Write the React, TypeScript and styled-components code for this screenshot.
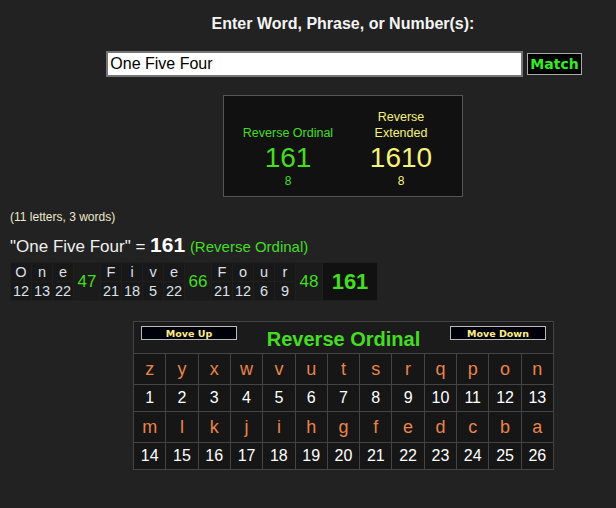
import styled, { createGlobalStyle } from "styled-components";

const GlobalStyle = createGlobalStyle`
  body {
    margin: 0;
    background: #222222;
    font-family: Arial, "Liberation Sans", sans-serif;
    color: #ffffff;
  }
`;

const Page = styled.main`
  width: 616px;
  height: 508px;
  overflow: hidden;
  padding-top: 14px;
  box-sizing: border-box;
`;

const Centered = styled.section`
  margin-left: 70px;
  width: 546px;
  display: flex;
  flex-direction: column;
  align-items: center;
`;

const Title = styled.h1`
  margin: 0;
  font-size: 16px;
  font-weight: bold;
  color: #f4f4f4;
  line-height: 19px;
`;

const SearchRow = styled.form`
  display: flex;
  align-items: center;
  gap: 4px;
  margin-top: 18px;
  margin-left: 2px;
`;

const SearchInput = styled.input`
  width: 417px;
  height: 26px;
  box-sizing: border-box;
  border: 2px solid #767676;
  background: #ffffff;
  font-family: Arial, "Liberation Sans", sans-serif;
  font-size: 16px;
  padding: 0 2px;
  color: #000;
  outline: none;
`;

const MatchButton = styled.button`
  height: 22px;
  padding: 0 2px;
  background: #000;
  border: 1px solid #aaaaaa;
  color: #33ee22;
  font-family: "DejaVu Sans", Verdana, sans-serif;
  font-weight: bold;
  font-size: 14px;
  line-height: 18px;
`;

const ResultBox = styled.div`
  margin-top: 18px;
  width: 240px;
  height: 102px;
  box-sizing: border-box;
  border: 1px solid #555555;
  background: #111111;
  display: grid;
  grid-template-columns: 108px 98px;
  column-gap: 10px;
  padding: 0 14px 9px 10px;
  align-items: end;
`;

const Cipher = styled.div<{ $color: string }>`
  display: flex;
  flex-direction: column;
  align-items: center;
  color: ${(p) => p.$color};
  text-align: center;
`;

const CipherName = styled.div`
  font-size: 12.5px;
  line-height: 16px;
`;

const CipherValue = styled.div`
  font-size: 28px;
  line-height: 34px;
`;

const CipherSub = styled.div`
  font-size: 12px;
  line-height: 12px;
`;

const Details = styled.section`
  margin-top: 13px;
  padding-left: 10px;
`;

const Count = styled.div`
  font-size: 12px;
  color: #eee8cc;
  line-height: 14px;
`;

const Phrase = styled.div`
  margin-top: 10px;
  font-size: 17px;
  line-height: 22px;
  color: #f0f0f0;
`;

const PhraseTotal = styled.b`
  font-size: 21px;
  color: #ffffff;
`;

const PhraseCipher = styled.span`
  font-size: 15px;
  color: #44dd22;
`;

const Breakdown = styled.table`
  margin-top: 4px;
  border-collapse: separate;
  border-spacing: 1px;
  background: #1f1f1f;
`;

const LetterCell = styled.td`
  min-width: 20px;
  width: 20px;
  padding: 0;
  height: 18px;
  text-align: center;
  background: #181818;
  color: #dde0ea;
  font-size: 14.5px;
  line-height: 18px;
`;

const SumCell = styled.td`
  min-width: 26px;
  padding: 0;
  text-align: center;
  background: #1b1b1b;
  color: #44dd22;
  font-size: 17px;
`;

const TotalCell = styled.td`
  min-width: 54px;
  padding: 0;
  text-align: center;
  background: #111111;
  color: #44dd22;
  font-size: 22px;
  font-weight: bold;
`;

const Chart = styled.section`
  margin-top: 20px;
  margin-left: 1px;
  width: 419px;
  border: 1px solid #444444;
  background: #444444;
`;

const ChartHeader = styled.div`
  height: 31px;
  background: #1b1b1b;
  display: flex;
  align-items: flex-start;
  justify-content: space-between;
  padding: 0 7px;
  margin-bottom: 1px;
`;

const MoveButton = styled.button`
  margin-top: 4px;
  width: 96px;
  height: 14px;
  padding: 0;
  background: #00000a;
  border: 1px solid #bbbbbb;
  color: #ffee88;
  font-family: "DejaVu Sans", Verdana, sans-serif;
  font-weight: bold;
  font-size: 9.5px;
  line-height: 11px;
`;

const ChartTitle = styled.h2`
  margin: 5px 0 0;
  font-size: 20px;
  font-weight: bold;
  color: #44dd22;
  line-height: 24px;
`;

const ChartGrid = styled.div`
  display: grid;
  grid-template-columns: repeat(13, 1fr);
  gap: 1px;
`;

const ChartCell = styled.div<{ $letter?: boolean }>`
  height: ${(p) => (p.$letter ? 30 : 26)}px;
  background: #161616;
  display: flex;
  align-items: center;
  justify-content: center;
  font-size: ${(p) => (p.$letter ? 18 : 16)}px;
  color: ${(p) => (p.$letter ? "#e8844c" : "#ffffff")};
`;

const words = [
  { letters: ["O", "n", "e"], values: [12, 13, 22], sum: 47 },
  { letters: ["F", "i", "v", "e"], values: [21, 18, 5, 22], sum: 66 },
  { letters: ["F", "o", "u", "r"], values: [21, 12, 6, 9], sum: 48 },
];

const alphabet = "zyxwvutsrqponmlkjihgfedcba".split("");

export default function App() {
  const rows = [alphabet.slice(0, 13), alphabet.slice(13)];

  return (
    <>
      <GlobalStyle />
      <Page>
        <Centered>
          <Title>Enter Word, Phrase, or Number(s):</Title>
          <SearchRow onSubmit={(e) => e.preventDefault()}>
            <SearchInput defaultValue="One Five Four" />
            <MatchButton type="submit">Match</MatchButton>
          </SearchRow>
          <ResultBox>
            <Cipher $color="#44dd22">
              <CipherName>Reverse Ordinal</CipherName>
              <CipherValue>161</CipherValue>
              <CipherSub>8</CipherSub>
            </Cipher>
            <Cipher $color="#f6f27a">
              <CipherName>
                Reverse
                <br />
                Extended
              </CipherName>
              <CipherValue>1610</CipherValue>
              <CipherSub>8</CipherSub>
            </Cipher>
          </ResultBox>
        </Centered>

        <Details>
          <Count>(11 letters, 3 words)</Count>
          <Phrase>
            "One Five Four" = <PhraseTotal>161</PhraseTotal>{" "}
            <PhraseCipher>(Reverse Ordinal)</PhraseCipher>
          </Phrase>
          <Breakdown>
            <tbody>
              <tr>
                {words.map((w) => [
                  ...w.letters.map((l, i) => (
                    <LetterCell key={w.sum + "l" + i}>{l}</LetterCell>
                  )),
                  <SumCell key={w.sum + "s"} rowSpan={2}>
                    {w.sum}
                  </SumCell>,
                ])}
                <TotalCell rowSpan={2}>161</TotalCell>
              </tr>
              <tr>
                {words.map((w) =>
                  w.values.map((v, i) => (
                    <LetterCell key={w.sum + "v" + i}>{v}</LetterCell>
                  ))
                )}
              </tr>
            </tbody>
          </Breakdown>
        </Details>

        <Centered>
          <Chart>
            <ChartHeader>
              <MoveButton type="button">Move Up</MoveButton>
              <ChartTitle>Reverse Ordinal</ChartTitle>
              <MoveButton type="button">Move Down</MoveButton>
            </ChartHeader>
            <ChartGrid>
              {rows.map((row, r) => [
                ...row.map((l) => (
                  <ChartCell key={l} $letter>
                    {l}
                  </ChartCell>
                )),
                ...row.map((_, i) => (
                  <ChartCell key={"n" + r + i}>{r * 13 + i + 1}</ChartCell>
                )),
              ])}
            </ChartGrid>
          </Chart>
        </Centered>
      </Page>
    </>
  );
}
